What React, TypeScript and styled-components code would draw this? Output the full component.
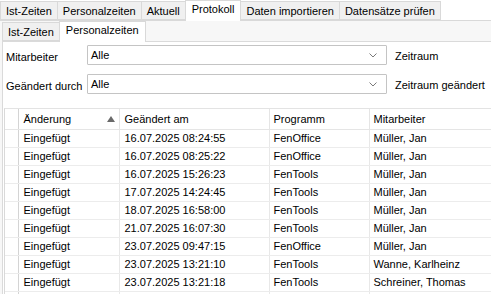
import { FC } from "react";
import styled, { createGlobalStyle } from "styled-components";

const GlobalStyle = createGlobalStyle`
    html, body {
        margin: 0;
        padding: 0;
        background: #ffffff;
        overflow: hidden;
    }
    body {
        font-family: "Liberation Sans", Arial, sans-serif;
        font-size: 11px;
        color: #000000;
    }
`

// top level tabs
const TabBar = styled.div`
    display: flex;
    align-items: flex-end;
    height: 20px;
`

const Tab = styled.div<{ $active?: boolean }>`
    box-sizing: border-box;
    height: ${({ $active }) => ($active ? "21px" : "19px")};
    padding: ${({ $active }) => ($active ? "2px 6px 0 6px" : "3px 5px 0 5px")};
    margin-bottom: ${({ $active }) => ($active ? "-1px" : "0")};
    background: ${({ $active }) => ($active ? "#ffffff" : "#f0f0f0")};
    border: 1px solid #d9d9d9;
    border-bottom: ${({ $active }) => ($active ? "none" : "1px solid #d9d9d9")};
    margin-left: -1px;
    white-space: nowrap;
    position: relative;
    z-index: ${({ $active }) => ($active ? 1 : 0)};

    &:first-child {
        margin-left: 0;
    }
`

const Page = styled.div`
    border-top: 1px solid #d9d9d9;
    background: #f7f7f7;
`

const SubTabBar = styled.div`
    display: flex;
    align-items: flex-end;
    height: 20px;
    padding-left: 2px;
`

const SubPanel = styled.div`
    margin-left: 2px;
    border-top: 1px solid #dadada;
    border-left: 1px solid #dadada;
    background: #ffffff;
    height: 260px;
`

const Filters = styled.div`
    display: flex;
    flex-direction: column;
    gap: 9px;
    padding: 3px 0 0 3px;
`

const FilterRow = styled.div`
    display: flex;
    align-items: center;
    height: 20px;
`

const FilterLabel = styled.div`
    width: 81px;
    padding-top: 4px;
`

const Combo = styled.div`
    box-sizing: border-box;
    width: 300px;
    height: 20px;
    border: 1px solid #c4c4c4;
    border-radius: 1px;
    background: #ffffff;
    display: flex;
    align-items: center;
    padding: 0 9px 0 3px;

    & span {
        flex: 1;
    }
`

const SideLabel = styled.div`
    margin-left: 8px;
    padding-top: 2px;
`

const GridWrap = styled.div`
    margin: 14px 0 0 1px;
    border-top: 1px solid #e3e3e3;
    border-left: 1px solid #d9d9d9;
`

const Grid = styled.table`
    border-collapse: collapse;
    table-layout: fixed;
    width: 490px;
`

const HeadCell = styled.th<{ $width?: number, $pad?: number }>`
    box-sizing: border-box;
    width: ${({ $width }) => ($width ? `${$width}px` : "auto")};
    height: 20px;
    padding: 1px 0 0 ${({ $pad }) => $pad ?? 5}px;
    font-weight: normal;
    text-align: left;
    border-right: 1px solid #e5e5e5;
    border-bottom: 1px solid #e5e5e5;
    white-space: nowrap;
    overflow: hidden;
    position: relative;
`

const SortArrow = styled.svg`
    position: absolute;
    right: 4px;
    top: 7px;
`

const Cell = styled.td<{ $pad?: number }>`
    height: 17px;
    padding: 0 0 0 ${({ $pad }) => $pad ?? 5}px;
    border-right: 1px solid #e8e8e8;
    border-bottom: 1px solid #ececec;
    white-space: nowrap;
    overflow: hidden;
`

const IndicatorCell = styled.td`
    border-right: 1px solid #d4d4d4;
    border-bottom: 1px solid #ececec;
`

const IndicatorHead = styled.th`
    box-sizing: border-box;
    width: 13px;
    border-right: 1px solid #d4d4d4;
    border-bottom: 1px solid #e5e5e5;
`

const Chevron: FC = () => (
    <svg width="8" height="5" viewBox="0 0 8 5">
        <path d="M0.5 0.5 L4 4 L7.5 0.5" fill="none" stroke="#7a7a7a" strokeWidth="1" />
    </svg>
)

type Entry = {
    change: string,
    date: string,
    program: string,
    employee: string,
}

const entries: Entry[] = [
    { change: "Eingefügt", date: "16.07.2025 08:24:55", program: "FenOffice", employee: "Müller, Jan" },
    { change: "Eingefügt", date: "16.07.2025 08:25:22", program: "FenOffice", employee: "Müller, Jan" },
    { change: "Eingefügt", date: "16.07.2025 15:26:23", program: "FenTools", employee: "Müller, Jan" },
    { change: "Eingefügt", date: "17.07.2025 14:24:45", program: "FenTools", employee: "Müller, Jan" },
    { change: "Eingefügt", date: "18.07.2025 16:58:00", program: "FenTools", employee: "Müller, Jan" },
    { change: "Eingefügt", date: "21.07.2025 16:07:30", program: "FenTools", employee: "Müller, Jan" },
    { change: "Eingefügt", date: "23.07.2025 09:47:15", program: "FenOffice", employee: "Müller, Jan" },
    { change: "Eingefügt", date: "23.07.2025 13:21:10", program: "FenTools", employee: "Wanne, Karlheinz" },
    { change: "Eingefügt", date: "23.07.2025 13:21:18", program: "FenTools", employee: "Schreiner, Thomas" },
    { change: "", date: "", program: "", employee: "" },
]

const topTabs = ["Ist-Zeiten", "Personalzeiten", "Aktuell", "Protokoll", "Daten importieren", "Datensätze prüfen"]

const App: FC = () => {
    return (
        <>
            <GlobalStyle />
            <TabBar>
                {topTabs.map((t) => (
                    <Tab key={t} $active={t === "Protokoll"}>{t}</Tab>
                ))}
            </TabBar>
            <Page>
                <SubTabBar>
                    <Tab>Ist-Zeiten</Tab>
                    <Tab $active>Personalzeiten</Tab>
                </SubTabBar>
                <SubPanel>
                    <Filters>
                        <FilterRow>
                            <FilterLabel>Mitarbeiter</FilterLabel>
                            <Combo><span>Alle</span><Chevron /></Combo>
                            <SideLabel>Zeitraum</SideLabel>
                        </FilterRow>
                        <FilterRow>
                            <FilterLabel>Geändert durch</FilterLabel>
                            <Combo><span>Alle</span><Chevron /></Combo>
                            <SideLabel>Zeitraum geändert</SideLabel>
                        </FilterRow>
                    </Filters>
                    <GridWrap>
                        <Grid>
                            <thead>
                                <tr>
                                    <IndicatorHead />
                                    <HeadCell $width={101}>
                                        Änderung
                                        <SortArrow width="8" height="6" viewBox="0 0 8 6">
                                            <path d="M4 0 L8 6 L0 6 Z" fill="#6a6a6a" />
                                        </SortArrow>
                                    </HeadCell>
                                    <HeadCell $width={150}>Geändert am</HeadCell>
                                    <HeadCell $width={100} $pad={4}>Programm</HeadCell>
                                    <HeadCell $pad={4}>Mitarbeiter</HeadCell>
                                </tr>
                            </thead>
                            <tbody>
                                {entries.map((e, i) => (
                                    <tr key={i}>
                                        <IndicatorCell />
                                        <Cell>{e.change}</Cell>
                                        <Cell>{e.date}</Cell>
                                        <Cell $pad={4}>{e.program}</Cell>
                                        <Cell $pad={4}>{e.employee}</Cell>
                                    </tr>
                                ))}
                            </tbody>
                        </Grid>
                    </GridWrap>
                </SubPanel>
            </Page>
        </>
    )
}

export default App
